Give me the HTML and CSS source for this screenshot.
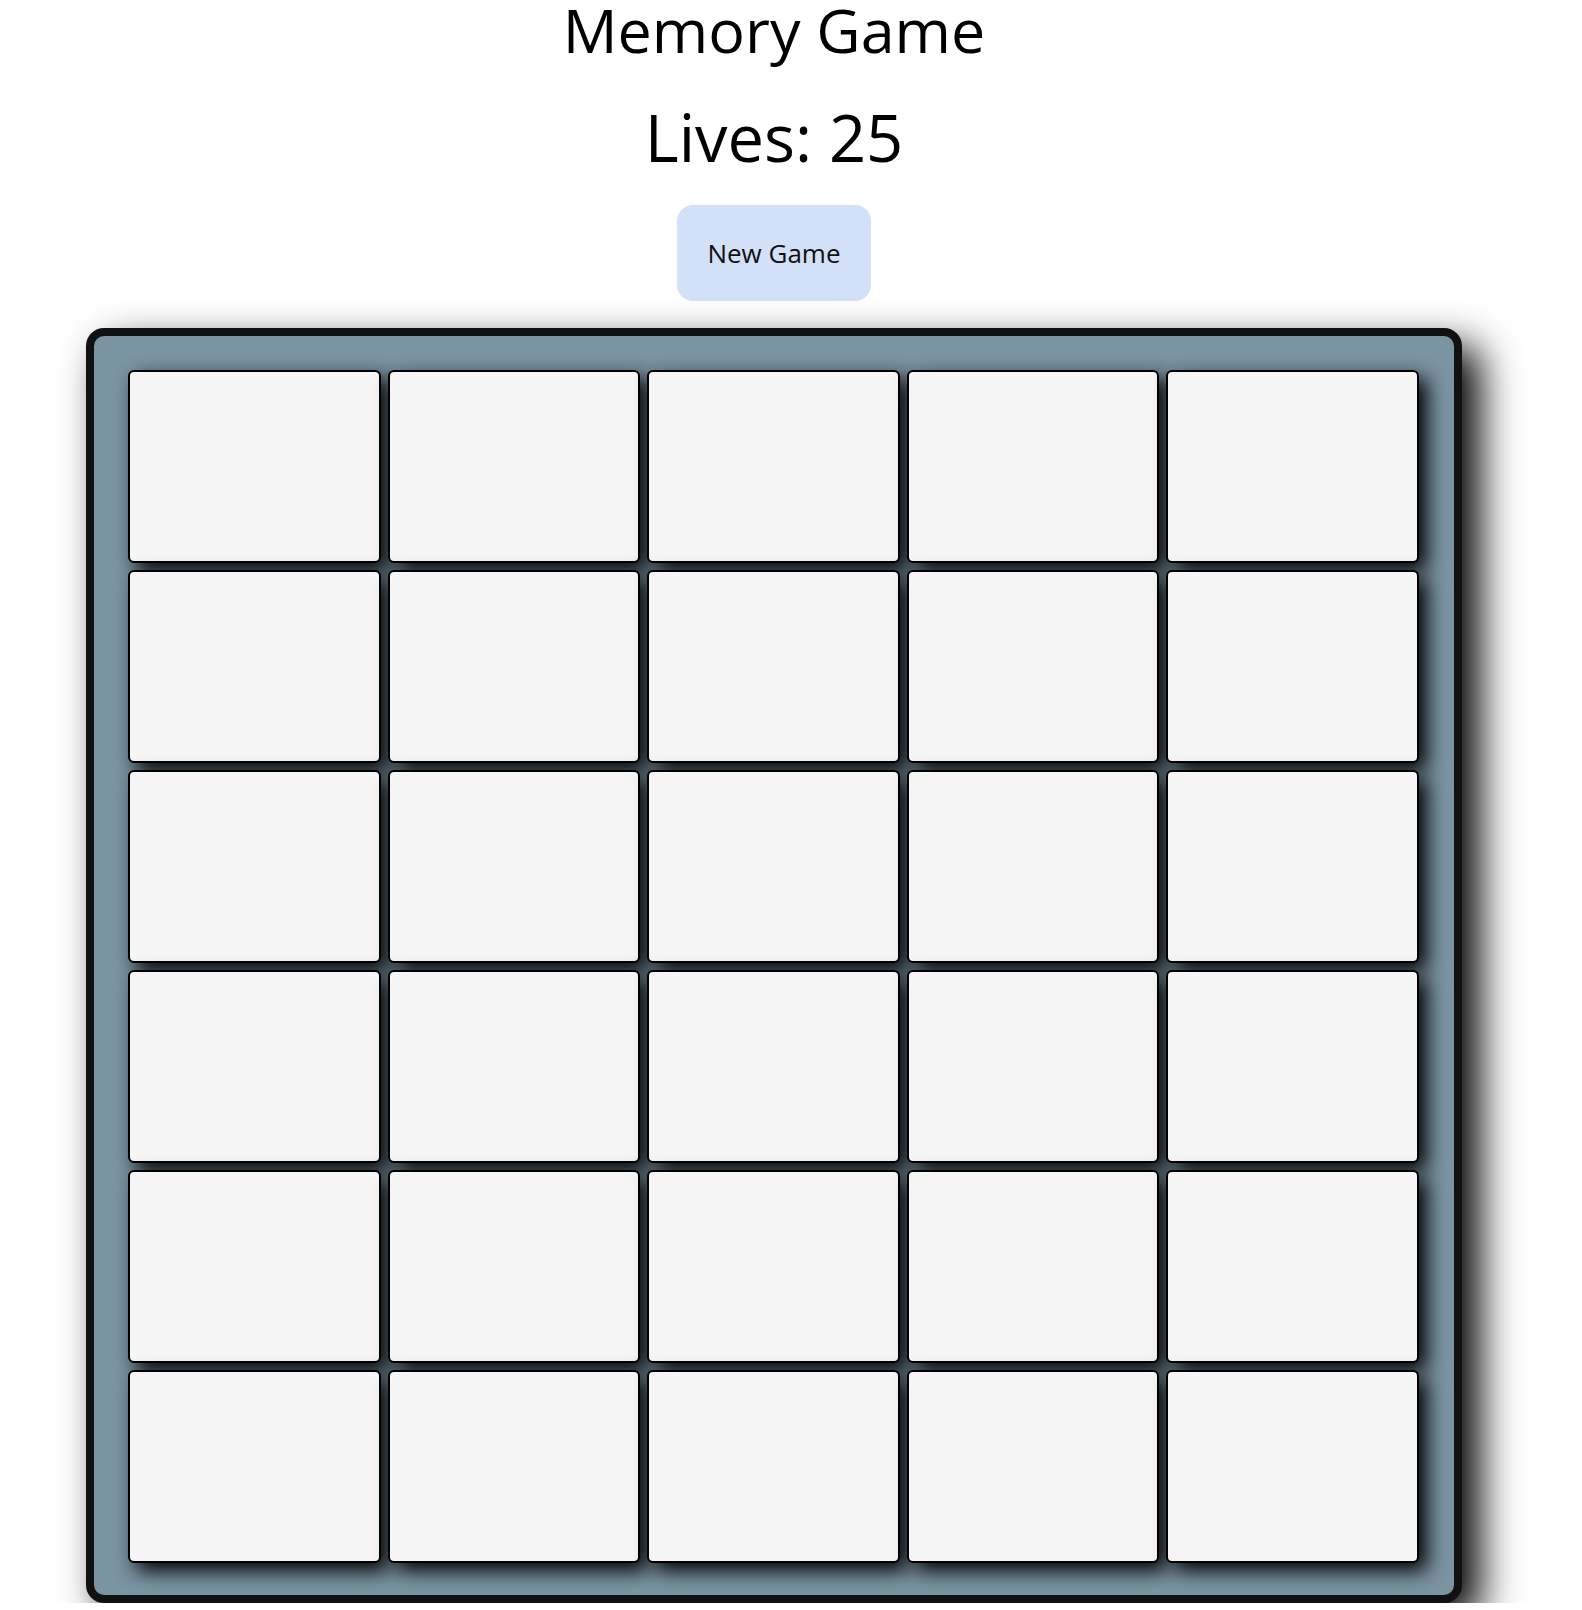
FILE: index.html
```html
<!DOCTYPE html>
<html lang="en">
<head>
<meta charset="utf-8">
<title>Memory Game</title>
<link rel="stylesheet" href="styles.css">
</head>
<body>
<div class="app">
  <h1 class="title">Memory Game</h1>
  <h2 class="lives">Lives: 25</h2>
  <button class="new-game">New Game</button>
  <div class="board">
    <div class="card"></div><div class="card"></div><div class="card"></div><div class="card"></div><div class="card"></div>
    <div class="card"></div><div class="card"></div><div class="card"></div><div class="card"></div><div class="card"></div>
    <div class="card"></div><div class="card"></div><div class="card"></div><div class="card"></div><div class="card"></div>
    <div class="card"></div><div class="card"></div><div class="card"></div><div class="card"></div><div class="card"></div>
    <div class="card"></div><div class="card"></div><div class="card"></div><div class="card"></div><div class="card"></div>
    <div class="card"></div><div class="card"></div><div class="card"></div><div class="card"></div><div class="card"></div>
  </div>
</div>
</body>
</html>
```

FILE: styles.css
```css
html, body {
  margin: 0;
  padding: 0;
  background: #ffffff;
}

body {
  font-family: "Open Sans", "Noto Sans", sans-serif;
  color: #000;
}

.app {
  width: 1548px;
  display: flex;
  flex-direction: column;
  align-items: center;
}

.title {
  margin: 0;
  font-size: 61px;
  line-height: 60px;
  font-weight: 400;
}

.lives {
  margin: 45px 0 0;
  font-size: 65px;
  line-height: 65px;
  font-weight: 400;
}

.new-game {
  margin-top: 35px;
  width: 194px;
  height: 96px;
  border: none;
  border-radius: 16px;
  background: #d2e0f8;
  color: #111;
  font-family: "Open Sans", "Noto Sans", sans-serif;
  font-size: 26px;
  padding: 0;
}

.board {
  margin-top: 27px;
  box-sizing: border-box;
  width: 1376px;
  height: 1275px;
  border: 8px solid #111;
  border-radius: 18px;
  background: #7b94a1;
  box-shadow: 18px 18px 40px #000;
  padding: 34px 35px 34px 34px;
  display: grid;
  grid-template-columns: repeat(5, 1fr);
  grid-template-rows: repeat(6, 193px);
  column-gap: 7px;
  row-gap: 7px;
}

.card {
  box-sizing: border-box;
  background: #f5f5f5;
  border: 2px solid #000;
  border-radius: 6px;
  box-shadow: 8px 8px 20px #000;
}
```
